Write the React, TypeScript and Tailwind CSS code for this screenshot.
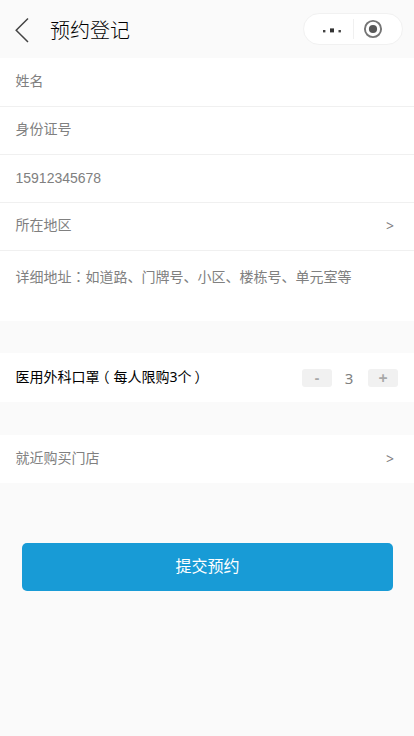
import React, { useState } from 'react';

interface FieldRowProps {
  children: React.ReactNode;
  arrow?: boolean;
  className?: string;
}

const FieldRow: React.FC<FieldRowProps> = ({ children, arrow = false, className = 'border-b border-[#f0f0f0] pb-1' }) => (
  <div className={`flex h-12 items-center justify-between bg-white pl-[15.5px] pr-5 ${className}`}>
    <span>{children}</span>
    {arrow && <span className="mt-0.5 font-['Noto_Sans'] text-[14px]">&gt;</span>}
  </div>
);

const Capsule = () => (
  <div className="flex h-8 w-[100px] items-center rounded-full border border-[#f1f1f1] bg-white">
    <svg width="98" height="30" viewBox="0 0 98 30" fill="none">
      <rect x="19" y="16" width="2.4" height="2.4" fill="#444" />
      <rect x="26" y="14.4" width="4" height="4" fill="#333" />
      <rect x="34.5" y="16" width="2.4" height="2.4" fill="#444" />
      <path d="M49.5 5v20" stroke="#f0f0f0" />
      <circle cx="69" cy="15" r="8.1" stroke="#757575" strokeWidth="1.9" />
      <circle cx="69" cy="15" r="4.1" fill="#585858" />
    </svg>
  </div>
);

const App: React.FC = () => {
  const [count, setCount] = useState(3);

  return (
    <div className="min-h-screen w-full bg-[#fafafa] font-['Liberation_Sans','Noto_Sans_CJK_SC',sans-serif] text-[14px] leading-5 text-[#808080]">
      <header className="flex h-[58px] items-center pl-[15px] pr-[11px] pb-px">
        <svg width="14" height="26" viewBox="0 0 14 26" fill="none" className="mt-[3px]">
          <path d="M13 1.5L1.2 13.2L13 25" stroke="#444" strokeWidth="1.5" />
        </svg>
        <h1 className="ml-[21px] mt-[5px] flex-1 text-[20px] leading-7 font-light text-black">预约登记</h1>
        <Capsule />
      </header>

      <section className="bg-white pt-px">
        <FieldRow>姓名</FieldRow>
        <FieldRow>身份证号</FieldRow>
        <FieldRow className="border-b border-[#f0f0f0] pb-0.5">15912345678</FieldRow>
        <FieldRow arrow>所在地区</FieldRow>
        <div className="h-[70px] pl-[15.5px] pt-[15px]">
          详细地址<span className="font-['Noto_Sans_CJK_TC',sans-serif]" lang="zh-TW">：</span>如道路、门牌号、小区、楼栋号、单元室等
        </div>
      </section>

      <section className="mt-8 flex h-[49px] items-center justify-between bg-white pl-[15.5px] pr-4">
        <span className="pb-0.5 text-black">
          医用外科口罩<span className="ml-[3px] mr-[4px] [font-feature-settings:'halt']">（</span>每人限购<span className="font-['Noto_Sans']">3</span>个<span className="ml-[3px] [font-feature-settings:'halt']">）</span>
        </span>
        <div className="flex items-center font-['Noto_Sans']">
          <button onClick={() => setCount(Math.max(0, count - 1))} className="h-[18px] w-[30px] rounded-[3px] bg-[#f1f1f1] leading-[18px] font-bold text-[#a8a8a8]">-</button>
          <span className="w-9 pr-0.5 pt-px text-center text-[15px]">{count}</span>
          <button onClick={() => setCount(Math.min(3, count + 1))} className="h-[18px] w-[30px] rounded-[3px] bg-[#f1f1f1] text-[16px] leading-[18px] font-bold text-[#a8a8a8]">+</button>
        </div>
      </section>

      <section className="mt-8 pt-px">
        <FieldRow arrow className="pb-0.5">就近购买门店</FieldRow>
      </section>

      <div className="mt-[60px] pl-[22px] pr-[21px]">
        <button className="h-12 w-full rounded-[5px] bg-[#189bd6] text-[16px] text-white">提交预约</button>
      </div>
    </div>
  );
};

export default App;
